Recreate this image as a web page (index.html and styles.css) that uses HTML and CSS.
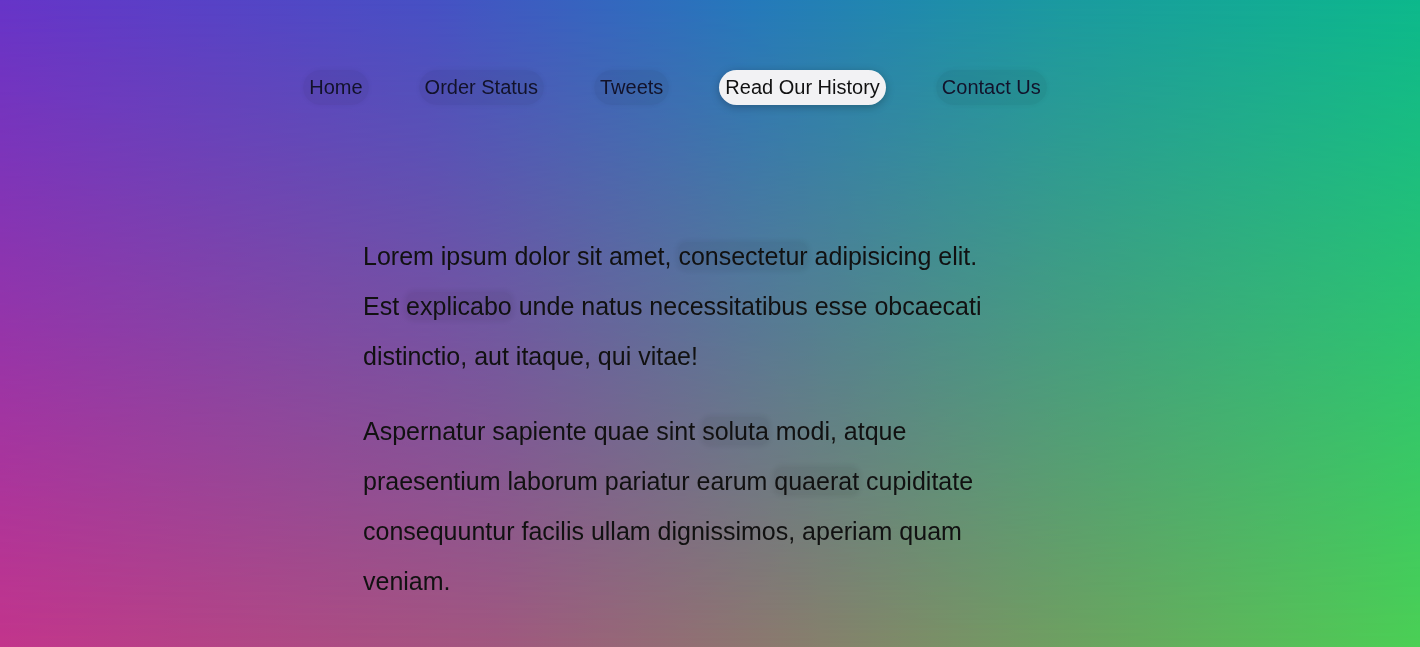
FILE: index.html
```html
<!DOCTYPE html>
<html lang="en">
<head>
<meta charset="utf-8">
<title>Read Our History</title>
<link rel="stylesheet" href="styles.css">
</head>
<body>
<header class="site-header">
  <nav class="nav">
    <a class="nav-link" href="#">Home</a>
    <a class="nav-link" href="#">Order Status</a>
    <a class="nav-link" href="#">Tweets</a>
    <a class="nav-link active" href="#">Read Our History</a>
    <a class="nav-link" href="#">Contact Us</a>
  </nav>
</header>
<main class="main">
  <article class="article">
    <p>Lorem ipsum dolor sit amet, <span class="hl">consectetur</span> adipisicing elit. Est <span class="hl">explicabo</span> unde natus necessitatibus esse obcaecati distinctio, aut itaque, qui vitae!</p>
    <p>Aspernatur sapiente quae sint <span class="hl">soluta</span> modi, atque praesentium laborum pariatur earum <span class="hl">quaerat</span> cupiditate consequuntur facilis ullam dignissimos, aperiam quam veniam.</p>
    <div class="more"><a class="more-link" href="#">Explore</a></div>
  </article>
</main>
</body>
</html>
```
FILE: styles.css
```css
html {
  background: linear-gradient(to right, #c3358c 0%, #a1587f 35%, #8a7b6e 55%, #6aa65f 78%, #4bd055 100%);
  min-height: 100%;
}
body {
  margin: 0;
  min-height: 100vh;
  font-family: "Liberation Sans", Arial, sans-serif;
  color: #111;
}
body::before {
  content: "";
  position: fixed;
  inset: 0;
  z-index: -1;
  background: linear-gradient(to right, #6634c8 0%, #4650c4 30%, #2479bb 53%, #1a9aa0 75%, #0cb88c 100%);
  -webkit-mask-image: linear-gradient(to bottom, #000 0%, rgba(0,0,0,0.55) 45%, transparent 100%);
  mask-image: linear-gradient(to bottom, #000 0%, rgba(0,0,0,0.55) 45%, transparent 100%);
}
.site-header {
  padding-top: 70px;
}
.nav {
  display: flex;
  justify-content: center;
  gap: 50px;
  padding-right: 70px;
}
.nav-link {
  display: block;
  padding: 6px;
  font-size: 20px;
  line-height: 23px;
  color: #12122a;
  text-decoration: none;
  border-radius: 18px;
  background: rgba(0, 0, 0, 0.05);
  box-shadow: 0 0 5px rgba(0, 0, 0, 0.05);
}
.nav-link.active {
  background: #f2f2f4;
  color: #111;
  box-shadow: 0 2px 8px rgba(0, 0, 0, 0.25);
}
.main {
  display: flex;
  justify-content: center;
  padding-right: 54px;
}
.article {
  width: 640px;
  padding-top: 126px;
}
.article p {
  margin: 0;
  font-size: 25px;
  line-height: 50px;
}
.article p + p {
  margin-top: 25px;
}
.hl {
  background: rgba(0, 0, 0, 0.05);
  border-radius: 8px;
  box-shadow: 0 0 4px 2px rgba(0, 0, 0, 0.05);
}
.more {
  margin-top: 45px;
  padding-left: 366px;
  padding-bottom: 40px;
}
.more-link {
  display: inline-block;
  padding: 9px 6px 6px;
  font-size: 20px;
  line-height: 23px;
  color: #111;
  text-decoration: none;
  border-radius: 18px;
  background: rgba(0, 0, 0, 0.07);
  box-shadow: 0 0 5px rgba(0, 0, 0, 0.06);
}
```
